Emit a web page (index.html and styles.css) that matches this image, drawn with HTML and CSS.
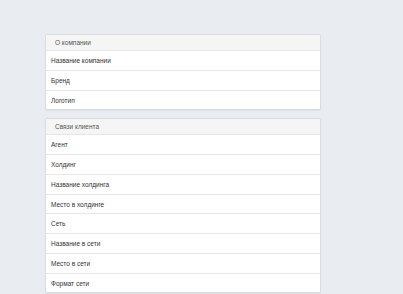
FILE: index.html
```html
<!DOCTYPE html>
<html lang="ru">
<head>
  <meta charset="UTF-8" />
  <title>Клиент</title>
  <link rel="stylesheet" href="styles.css">
</head>
<body>
  <div class="page">
    <div class="panel">
      <div class="panel-heading">О компании</div>
      <div class="panel-row">Название компании</div>
      <div class="panel-row">Бренд</div>
      <div class="panel-row">Логотип</div>
    </div>

    <div class="panel">
      <div class="panel-heading">Связи клиента</div>
      <div class="panel-row">Агент</div>
      <div class="panel-row">Холдинг</div>
      <div class="panel-row">Название холдинга</div>
      <div class="panel-row">Место в холдинге</div>
      <div class="panel-row">Сеть</div>
      <div class="panel-row">Название в сети</div>
      <div class="panel-row">Место в сети</div>
      <div class="panel-row">Формат сети</div>
    </div>
  </div>
</body>
</html>
```

FILE: styles.css
```css
body {
  margin: 0;
  font-family: 'Liberation Sans', Arial, sans-serif;
  background-color: #e9edf2;
  color: #333;
}

.page {
  padding: 34px 0 0 45px;
  width: 276px;
}

.panel {
  background-color: #fff;
  border: 1px solid #dcdcdc;
  border-radius: 2px;
  box-shadow: 0 1px 1px rgba(0, 0, 0, 0.05);
  margin-bottom: 8px;
}

.panel-heading {
  background-color: #f5f5f5;
  color: #555;
  font-size: 6.5px;
  height: 15px;
  line-height: 15px;
  padding: 0 9px;
  border-bottom: 1px solid #e6e6e6;
}

.panel-row {
  font-size: 6.5px;
  height: 18.75px;
  line-height: 19.5px;
  padding: 0 5px;
  border-bottom: 1px solid #e6e6e6;
}

.panel-row:last-child {
  border-bottom: none;
}
```
